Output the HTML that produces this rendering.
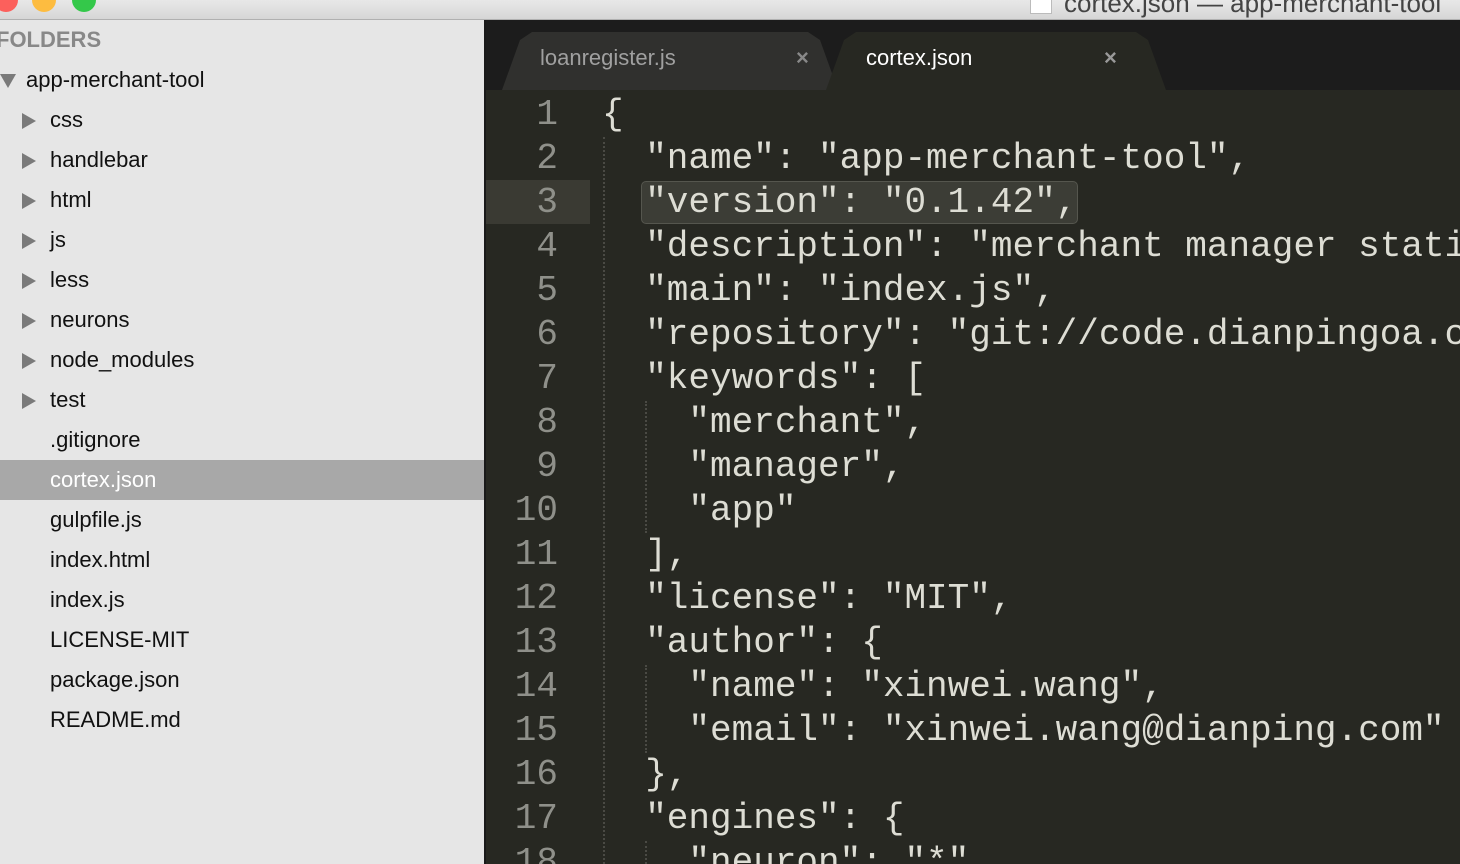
<!DOCTYPE html>
<html style="width:1460px;height:864px;overflow:hidden"><head><style>
*{margin:0;padding:0;box-sizing:border-box}
body{width:1460px;height:864px;overflow:hidden;background:#272822;position:relative;font-family:"Liberation Sans",sans-serif}
#title{position:absolute;left:0;top:0;width:1460px;height:20px;background:linear-gradient(#e8e8e8,#d6d6d6);border-bottom:1px solid #b0b0b0;overflow:hidden}
.dot{position:absolute;top:-12px;width:24px;height:24px;border-radius:50%}
#side{position:absolute;left:0;top:20px;width:486px;height:844px;background:#e6e6e6;border-right:2px solid #1a1a1a;overflow:hidden}
.it{position:absolute;left:0;width:484px;height:40px;line-height:40px;font-size:22px;color:#111}
.tri{position:absolute;left:22px;top:13px;width:0;height:0;border-top:8px solid transparent;border-bottom:8px solid transparent;border-left:14px solid #7a7a7a}
#tabs{position:absolute;left:486px;top:20px;width:974px;height:70px;background:#1c1c1c}
.tab{position:absolute;top:12px;height:58px;font-size:22px;line-height:52px}
.ln{position:absolute;left:486px;width:72px;text-align:right;font-family:"Liberation Mono",monospace;font-size:36px;color:#8f908a;height:44px;line-height:44px}
.cl{position:absolute;left:602px;white-space:pre;font-family:"Liberation Mono",monospace;font-size:36px;color:#ddddd4;height:44px;line-height:44px}
.g{position:absolute;width:0;border-left:2px dotted #4a4a44}
</style></head><body>
<div id="title">
<div class="dot" style="left:-6px;background:#fc605c"></div>
<div class="dot" style="left:32px;background:#fdbc40"></div>
<div class="dot" style="left:72px;background:#34c84a"></div>
<div style="position:absolute;left:1030px;top:-4px;width:22px;height:18px;background:#fff;border:1px solid #bbb"></div>
<div style="position:absolute;left:1064px;top:-12px;font-size:26px;color:#444;white-space:nowrap">cortex.json — app-merchant-tool</div>
</div>
<div id="side">
<div class="it" style="top:0;left:-4px;font-weight:bold;color:#888;font-size:22px">FOLDERS</div>
<div class="it" style="top:40px"><div style="position:absolute;left:0;top:14px;border-left:8px solid transparent;border-right:8px solid transparent;border-top:14px solid #7a7a7a"></div><span style="position:absolute;left:26px">app-merchant-tool</span></div>
<div class="it" style="top:80px"><div class="tri"></div><span style="position:absolute;left:50px">css</span></div>
<div class="it" style="top:120px"><div class="tri"></div><span style="position:absolute;left:50px">handlebar</span></div>
<div class="it" style="top:160px"><div class="tri"></div><span style="position:absolute;left:50px">html</span></div>
<div class="it" style="top:200px"><div class="tri"></div><span style="position:absolute;left:50px">js</span></div>
<div class="it" style="top:240px"><div class="tri"></div><span style="position:absolute;left:50px">less</span></div>
<div class="it" style="top:280px"><div class="tri"></div><span style="position:absolute;left:50px">neurons</span></div>
<div class="it" style="top:320px"><div class="tri"></div><span style="position:absolute;left:50px">node_modules</span></div>
<div class="it" style="top:360px"><div class="tri"></div><span style="position:absolute;left:50px">test</span></div>
<div class="it" style="top:400px"><span style="position:absolute;left:50px">.gitignore</span></div>
<div class="it" style="top:440px;background:#a8a8a8;color:#fff"><span style="position:absolute;left:50px">cortex.json</span></div>
<div class="it" style="top:480px"><span style="position:absolute;left:50px">gulpfile.js</span></div>
<div class="it" style="top:520px"><span style="position:absolute;left:50px">index.html</span></div>
<div class="it" style="top:560px"><span style="position:absolute;left:50px">index.js</span></div>
<div class="it" style="top:600px"><span style="position:absolute;left:50px">LICENSE-MIT</span></div>
<div class="it" style="top:640px"><span style="position:absolute;left:50px">package.json</span></div>
<div class="it" style="top:680px"><span style="position:absolute;left:50px">README.md</span></div>
</div>
<div id="tabs">
<div class="tab" style="left:16px;width:336px;background:#30302e;color:#a0a0a0;clip-path:polygon(0 100%,18px 8px,30px 0,306px 0,318px 8px,100% 100%)"><span style="position:absolute;left:38px">loanregister.js</span><span style="position:absolute;left:294px;color:#888;font-weight:bold">×</span></div>
<div class="tab" style="left:340px;width:340px;background:#272822;color:#fff;clip-path:polygon(0 100%,18px 8px,30px 0,310px 0,322px 8px,100% 100%)"><span style="position:absolute;left:40px">cortex.json</span><span style="position:absolute;left:278px;color:#999;font-weight:bold">×</span></div>
</div>
<div style="position:absolute;left:486px;top:180px;width:104px;height:44px;background:#3a3a33"></div>
<div style="position:absolute;left:641px;top:181px;width:437px;height:43px;background:#3c3d36;border-radius:5px;border:1px solid #55564e"></div>
<div class="g" style="left:603px;top:137px;height:727px"></div>
<div class="g" style="left:645px;top:401px;height:132px"></div>
<div class="g" style="left:645px;top:665px;height:88px"></div>
<div class="g" style="left:645px;top:841px;height:23px"></div>
<div class="ln" style="top:93px">1</div><div class="cl" style="top:93px">{</div>
<div class="ln" style="top:137px">2</div><div class="cl" style="top:137px">  "name": "app-merchant-tool",</div>
<div class="ln" style="top:181px">3</div><div class="cl" style="top:181px">  "version": "0.1.42",</div>
<div class="ln" style="top:225px">4</div><div class="cl" style="top:225px">  "description": "merchant manager static</div>
<div class="ln" style="top:269px">5</div><div class="cl" style="top:269px">  "main": "index.js",</div>
<div class="ln" style="top:313px">6</div><div class="cl" style="top:313px">  "repository": "git://code.dianpingoa.com</div>
<div class="ln" style="top:357px">7</div><div class="cl" style="top:357px">  "keywords": [</div>
<div class="ln" style="top:401px">8</div><div class="cl" style="top:401px">    "merchant",</div>
<div class="ln" style="top:445px">9</div><div class="cl" style="top:445px">    "manager",</div>
<div class="ln" style="top:489px">10</div><div class="cl" style="top:489px">    "app"</div>
<div class="ln" style="top:533px">11</div><div class="cl" style="top:533px">  ],</div>
<div class="ln" style="top:577px">12</div><div class="cl" style="top:577px">  "license": "MIT",</div>
<div class="ln" style="top:621px">13</div><div class="cl" style="top:621px">  "author": {</div>
<div class="ln" style="top:665px">14</div><div class="cl" style="top:665px">    "name": "xinwei.wang",</div>
<div class="ln" style="top:709px">15</div><div class="cl" style="top:709px">    "email": "xinwei.wang@dianping.com"</div>
<div class="ln" style="top:753px">16</div><div class="cl" style="top:753px">  },</div>
<div class="ln" style="top:797px">17</div><div class="cl" style="top:797px">  "engines": {</div>
<div class="ln" style="top:841px">18</div><div class="cl" style="top:841px">    "neuron": "*"</div>
</body></html>
